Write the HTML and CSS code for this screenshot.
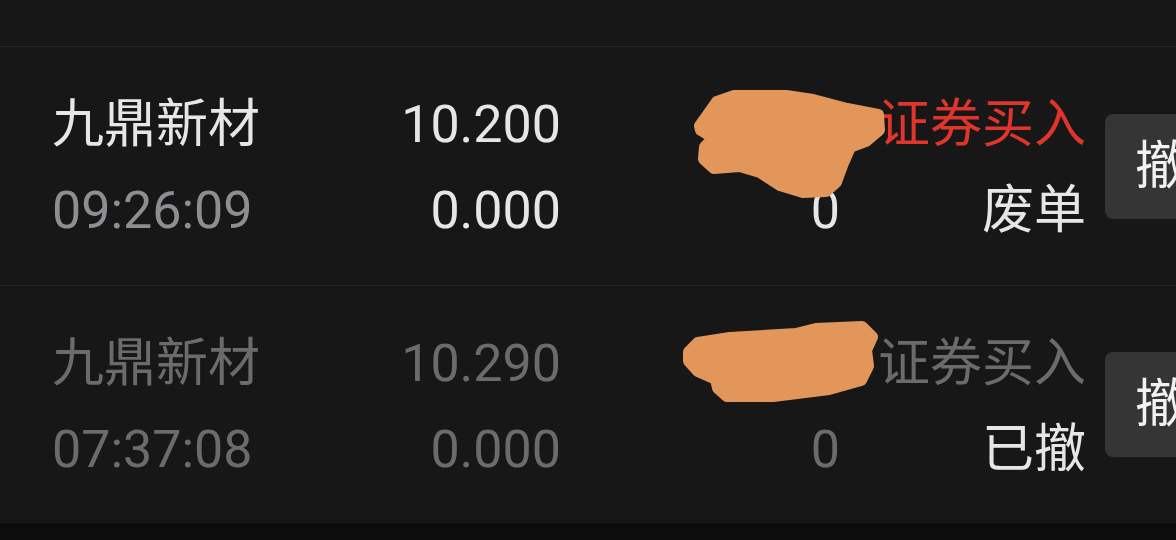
FILE: index.html
```html
<!DOCTYPE html>
<html lang="zh">

<head>
	<meta charset="UTF-8">
	<title>委托列表</title>
	<link rel="stylesheet" href="styles.css">
</head>

<body>
	<div class="page">
		<div class="top-bar"></div>

		<div class="order-row">
			<div class="order-grid">
				<div class="cell name">九鼎新材</div>
				<div class="cell num">10.200</div>
				<div class="cell num qty">
					<svg class="blot blot-one" width="200" height="112" viewBox="0 0 200 112">
						<path d="M10 36 L27 12 L47 5 L90 5 L123 10 L157 19 L188 25 L189 40 L176 51 L160 57 L153 73 L146 92 L136 101 L113 102 L90 95 L70 82 L50 76 L24 78 L14 69 L15 57 L24 48 L11 40 Z" />
					</svg>
				</div>
				<div class="cell num side buy">证券买入</div>

				<div class="cell time">09:26:09</div>
				<div class="cell num">0.000</div>
				<div class="cell num">0</div>
				<div class="cell num status">废单</div>
			</div>
			<div class="cancel-btn">撤</div>
		</div>

		<div class="order-row done">
			<div class="order-grid">
				<div class="cell name">九鼎新材</div>
				<div class="cell num">10.290</div>
				<div class="cell num qty">
					<svg class="blot blot-two" width="200" height="90" viewBox="0 0 200 90">
						<path d="M11 33 L20 24 L52 19 L118 15 L138 10 L184 8 L194 18 L188 31 L190 47 L183 61 L151 70 L95 77 L49 77 L40 69 L38 60 L20 52 L11 42 Z" />
					</svg>
				</div>
				<div class="cell num side">证券买入</div>

				<div class="cell time">07:37:08</div>
				<div class="cell num">0.000</div>
				<div class="cell num">0</div>
				<div class="cell num status">已撤</div>
			</div>
			<div class="cancel-btn">撤</div>
		</div>

		<div class="bottom-bar"></div>
	</div>
</body>

</html>
```

FILE: styles.css
```css
body {
	margin: 0;
	padding: 0;
	background-color: #171717;
	font-family: Roboto, "Noto Sans CJK SC", sans-serif;
	overflow: hidden;
}

.page {
	width: 1176px;
	height: 540px;
	overflow: hidden;
	display: flex;
	flex-direction: column;
}

.top-bar {
	height: 46px;
	flex-shrink: 0;
	border-bottom: 1px solid #262626;
}

.order-row {
	flex-shrink: 0;
	display: flex;
	align-items: flex-start;
	border-bottom: 1px solid #262626;
	box-sizing: border-box;
	height: 239px;
}

.order-row.done {
	border-bottom: none;
	height: 237px;
}

.order-grid {
	display: grid;
	grid-template-columns: 240px 269px 279px 246px;
	grid-auto-rows: 86px;
	padding: 35px 0 0 52px;
	font-size: 52px;
	line-height: 86px;
	color: #e6e6e6;
}

.cell {
	white-space: nowrap;
}

.num {
	text-align: right;
}

.time {
	color: #8e8e92;
}

.qty {
	position: relative;
}

.buy {
	color: #e0352b;
}

.done .name,
.done .num,
.done .time {
	color: #6b6b6b;
}

.done .status {
	color: #e6e6e6;
}

.blot {
	position: absolute;
	fill: #e2965a;
	stroke: #e2965a;
	stroke-width: 12;
	stroke-linejoin: round;
}

.blot-one {
	left: 129px;
	top: 8px;
}

.blot-two {
	left: 117px;
	top: -2px;
}

.cancel-btn {
	align-self: center;
	margin-left: 19px;
	width: 120px;
	height: 105px;
	flex-shrink: 0;
	box-sizing: border-box;
	padding-left: 30px;
	background-color: #353535;
	border-radius: 8px;
	color: #f2f2f2;
	font-size: 52px;
	line-height: 105px;
}

.bottom-bar {
	flex: 1;
	background-color: #0c0c0c;
}
```
